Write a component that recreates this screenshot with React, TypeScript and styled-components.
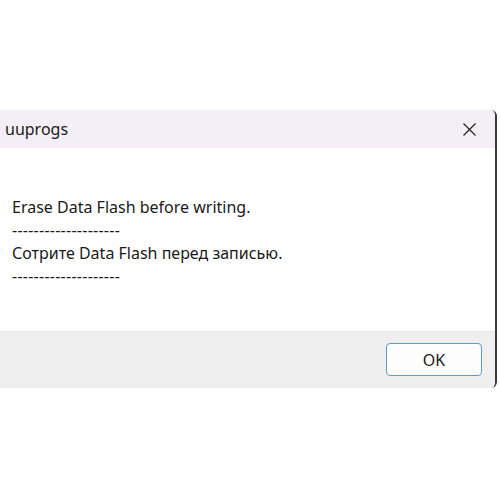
import styled, { createGlobalStyle } from 'styled-components';

const GlobalStyle = createGlobalStyle`
  html, body {
    margin: 0;
    padding: 0;
    background: #ffffff;
    font-family: "Noto Sans", "Open Sans", sans-serif;
  }
`;

const Page = styled.div`
  width: 500px;
  height: 500px;
  padding-top: 110px;
  box-sizing: border-box;
  background: #ffffff;
`;

const Dialog = styled.div`
  width: 497px;
  display: flex;
  flex-direction: column;
  border-right: 2px solid #3a3a3a;
  border-top-right-radius: 6px;
  border-bottom-right-radius: 6px;
  box-sizing: border-box;
  overflow: hidden;
`;

const TitleBar = styled.div`
  height: 38px;
  display: flex;
  align-items: center;
  justify-content: space-between;
  padding: 0 16px 0 5px;
  background: #f4eff6;
`;

const Title = styled.span`
  font-size: 16px;
  color: #1a1a1a;
`;

const CloseButton = styled.button`
  width: 20px;
  height: 20px;
  padding: 0;
  border: none;
  background: none;
  display: flex;
  align-items: center;
  justify-content: center;
`;

const Body = styled.div`
  height: 183px;
  background: #ffffff;
  padding: 48px 12px 0;
  box-sizing: border-box;
  display: flex;
  flex-direction: column;
`;

const Line = styled.div<{ $dash?: boolean }>`
  font-size: 16px;
  line-height: 23px;
  color: #1a1a1a;
  white-space: pre;
  letter-spacing: ${({ $dash }) => ($dash ? '0.25px' : '0')};
`;

const Footer = styled.div`
  height: 57px;
  background: #efefef;
  border-top: 1px solid #e6e6e6;
  box-sizing: border-box;
  display: flex;
  align-items: center;
  justify-content: flex-end;
  padding: 0 13px 1px 0;
`;

const OkButton = styled.button`
  width: 96px;
  height: 33px;
  border: 1px solid #5b9bd5;
  border-radius: 4px;
  background: #fdfdfd;
  font-family: "Noto Sans", "Open Sans", sans-serif;
  font-size: 16px;
  color: #1a1a1a;
  padding: 0;
`;

const lines = [
  'Erase Data Flash before writing.',
  '--------------------',
  'Сотрите Data Flash перед записью.',
  '--------------------',
];

export default function App() {
  return (
    <>
      <GlobalStyle />
      <Page>
        <Dialog>
          <TitleBar>
            <Title>uuprogs</Title>
            <CloseButton aria-label="Close">
              <svg width="13" height="13" viewBox="0 0 13 13">
                <path d="M0.5 0.5 L12.5 12.5 M12.5 0.5 L0.5 12.5" stroke="#1a1a1a" strokeWidth="1.1" fill="none" />
              </svg>
            </CloseButton>
          </TitleBar>
          <Body>
            {lines.map((text, i) => (
              <Line key={i} $dash={text.startsWith('-')}>
                {text}
              </Line>
            ))}
          </Body>
          <Footer>
            <OkButton>OK</OkButton>
          </Footer>
        </Dialog>
      </Page>
    </>
  );
}
